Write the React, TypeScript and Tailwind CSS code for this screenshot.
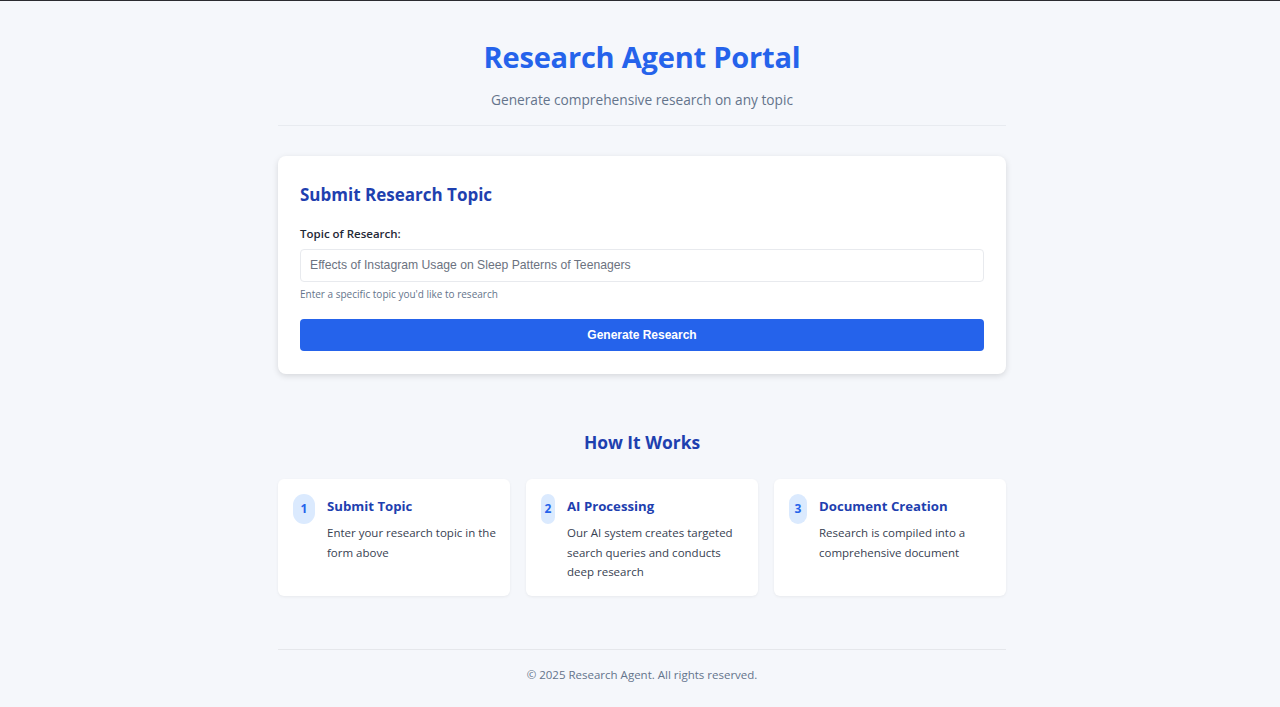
import React from 'react';

const steps = [
  { n: '1', title: 'Submit Topic', text: 'Enter your research topic in the form above', badge: 'w-[22px]' },
  { n: '2', title: 'AI Processing', text: 'Our AI system creates targeted search queries and conducts deep research', badge: 'w-[14px]' },
  { n: '3', title: 'Document Creation', text: 'Research is compiled into a comprehensive document', badge: 'w-[18px]' },
];

const App = () => {
  return (
    <div className="min-h-screen bg-[#f5f7fb] border-t border-[#2b2b30] font-['Open_Sans',sans-serif] pl-1">
      <div className="w-[728px] mx-auto flex flex-col">
        <header className="flex flex-col items-center pt-[34px] pb-[14px] border-b border-[#e8ebf0]">
          <h1 className="text-[29px] font-bold text-[#2563eb] leading-[44px] tracking-[-0.2px]">Research Agent Portal</h1>
          <p className="mt-[10px] text-[13.7px] text-[#64748b] leading-[22px]">Generate comprehensive research on any topic</p>
        </header>

        <section className="mt-[30px] bg-white rounded-lg shadow-[0_2px_6px_rgba(0,0,0,0.13)] px-[22px] pt-[26px] pb-[23px]">
          <h2 className="text-[17px] font-bold text-[#1e40af] leading-[26px]">Submit Research Topic</h2>
          <label className="block mt-[17px] text-[11.5px] font-semibold text-[#1f2937] leading-[18px]">Topic of Research:</label>
          <div className="mt-[6px] h-[33px] border border-[#e8eaee] rounded flex items-center px-[9px] font-['Liberation_Sans',sans-serif] text-[12.2px] text-[#6b7280]">
            Effects of Instagram Usage on Sleep Patterns of Teenagers
          </div>
          <p className="mt-[4px] text-[10px] text-[#64748b] leading-[16px]">Enter a specific topic you'd like to research</p>
          <button className="mt-[17px] w-full h-[32px] bg-[#2563eb] rounded text-white font-bold text-[12px] font-['Liberation_Sans',sans-serif]">
            Generate Research
          </button>
        </section>

        <h2 className="mt-[55px] text-center text-[17.4px] font-bold text-[#1e40af] leading-[26px]">How It Works</h2>

        <div className="mt-[24px] grid grid-cols-3 gap-4">
          {steps.map((s) => (
            <div key={s.n} className="bg-white rounded-md shadow-[0_1px_3px_rgba(0,0,0,0.06)] h-[117px] pl-[15px] pr-[14px] pt-[15px] flex gap-3">
              <div className={`${s.badge} h-[30px] shrink-0 rounded-full bg-[#dbeafe] text-[#2563eb] text-[12px] font-bold flex items-center justify-center`}>
                {s.n}
              </div>
              <div className="flex flex-col">
                <h3 className="text-[13.2px] font-bold text-[#1e40af] leading-[24px]">{s.title}</h3>
                <p className="mt-[5px] text-[11.5px] text-[#374151] leading-[19.5px]">{s.text}</p>
              </div>
            </div>
          ))}
        </div>

        <footer className="mt-[53px] border-t border-[#e5e7eb] pt-[15px] pb-[20px] text-center text-[11.5px] text-[#64748b] leading-[20px]">
          © 2025 Research Agent. All rights reserved.
        </footer>
      </div>
    </div>
  );
};

export default App;
